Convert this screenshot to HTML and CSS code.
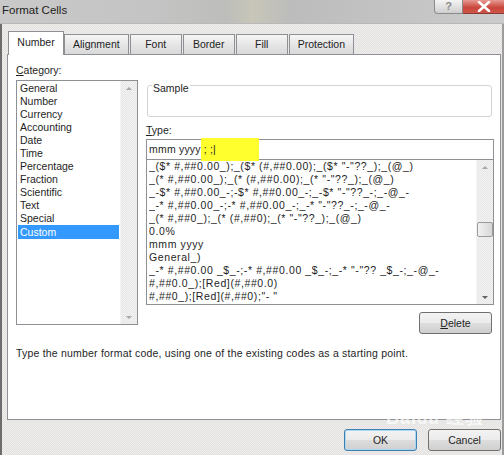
FILE: index.html
```html
<!DOCTYPE html>
<html>
<head>
<meta charset="utf-8">
<link rel="stylesheet" href="styles.css">
</head>
<body>
<div class="window">
  <div class="titlebar">
    <span class="title">Format Cells</span>
    <div class="caption-btns">
      <div class="btn-help">?</div>
      <div class="btn-close">
        <svg width="14" height="11" viewBox="0 0 14 11"><path d="M2 1 L12 10 M12 1 L2 10" stroke="#fff" stroke-width="2.6" stroke-linecap="round"/></svg>
      </div>
    </div>
  </div>
  <div class="client">
    <div class="tabs">
      <div class="tab active">Number</div>
      <div class="tab">Alignment</div>
      <div class="tab">Font</div>
      <div class="tab">Border</div>
      <div class="tab">Fill</div>
      <div class="tab">Protection</div>
    </div>
    <div class="panel">
      <div class="columns">
        <div class="left">
          <div class="label"><u>C</u>ategory:</div>
          <div class="catbox">
            <ul class="catlist">
              <li>General</li>
              <li>Number</li>
              <li>Currency</li>
              <li>Accounting</li>
              <li>Date</li>
              <li>Time</li>
              <li>Percentage</li>
              <li>Fraction</li>
              <li>Scientific</li>
              <li>Text</li>
              <li>Special</li>
              <li class="sel">Custom</li>
            </ul>
            <div class="vscroll">
              <span class="arrow up"></span>
              <span class="arrow down"></span>
            </div>
          </div>
        </div>
        <div class="right">
          <div class="sample">
            <span class="legend">Sample</span>
          </div>
          <div class="label type-label"><u>T</u>ype:</div>
          <div class="typebox">mmm yyyy<span class="marker">; ;|</span></div>
          <div class="codebox">
            <ul class="codelist">
              <li>_($* #,##0.00_);_($* (#,##0.00);_($* "-"??_);_(@_)</li>
              <li>_(* #,##0.00_);_(* (#,##0.00);_(* "-"??_);_(@_)</li>
              <li>_-$* #,##0.00_-;-$* #,##0.00_-;_-$* "-"??_-;_-@_-</li>
              <li>_-* #,##0.00_-;-* #,##0.00_-;_-* "-"??_-;_-@_-</li>
              <li>_(* #,##0_);_(* (#,##0);_(* "-"??_);_(@_)</li>
              <li>0.0%</li>
              <li>mmm yyyy</li>
              <li>General_)</li>
              <li>_-* #,##0.00 _$_-;-* #,##0.00 _$_-;_-* "-"?? _$_-;_-@_-</li>
              <li>#,##0.0_);[Red](#,##0.0)</li>
              <li>#,##0_);[Red](#,##0);"- "</li>
            </ul>
            <div class="vscroll">
              <span class="arrow up"></span>
              <span class="thumb"></span>
              <span class="arrow down"></span>
            </div>
          </div>
          <div class="delete-row">
            <button class="btn delete"><u>D</u>elete</button>
          </div>
        </div>
      </div>
      <p class="hint">Type the number format code, using one of the existing codes as a starting point.</p>
    </div>
    <div class="footer">
      <button class="btn ok">OK</button>
      <button class="btn cancel">Cancel</button>
    </div>
    <div class="watermark">Bai<span class="paw">du</span> 经验</div>
  </div>
</div>
</body>
</html>
```

FILE: styles.css
```css
* { box-sizing: border-box; }
html, body { margin: 0; padding: 0; }
body {
  width: 504px;
  height: 455px;
  overflow: hidden;
  font-family: "Liberation Sans", Arial, "Noto Sans CJK SC", sans-serif;
  font-size: 10.5px;
  color: #1e1e1e;
  background: #e9e9e9;
}
.window {
  position: relative;
  width: 504px;
  height: 455px;
  background: #e9e8e6;
}
.titlebar {
  height: 24px;
  display: flex;
  align-items: flex-start;
  background: linear-gradient(90deg, #c9c9c9 0%, #c4c4c4 30%, #bdbdbb 45%, #c8c6b8 50%, #bcbcbc 58%, #c4c4c4 80%, #cbcbcb 100%);
  border-bottom: 1px solid #b8b8b8;
}
.title {
  font-size: 11.5px;
  color: #222;
  padding: 4px 0 0 2px;
}
.caption-btns {
  margin-left: auto;
  display: flex;
}
.btn-help {
  width: 29px;
  height: 14px;
  border: 1px solid #8a8a8a;
  border-top: none;
  border-radius: 0 0 0 4px;
  background: linear-gradient(#f4f4f4, #cfcfcf);
  color: #8a8a8a;
  font-weight: bold;
  font-size: 11px;
  line-height: 12px;
  text-align: center;
}
.btn-close {
  width: 41px;
  height: 14px;
  background: linear-gradient(#e79a92, #c8453a 60%, #d0554a);
  border-bottom: 1px solid #8a3a33;
  display: flex;
  align-items: center;
  justify-content: center;
}
.client {
  height: 431px;
  border-left: 2px solid #6d6d6d;
  border-right: 2px solid #9c9c9c;
  padding: 7px 1px 0 5px;
  background-color: #e8e7e5;
  background-image: repeating-conic-gradient(#e3e2e0 0 25%, #eeedeb 0 50%);
  background-size: 2px 2px;
}
.tabs {
  display: flex;
  align-items: flex-end;
  height: 23px;
  padding-left: 1px;
  gap: 1px;
  position: relative;
  z-index: 1;
}
.tab {
  height: 20px;
  min-width: 52px;
  padding: 0 8px;
  border: 1px solid #8e9096;
  border-bottom: none;
  background: linear-gradient(#f6f6f6, #e6e6e6 50%, #d9d9d9);
  text-align: center;
  line-height: 19px;
  white-space: nowrap;
}
.tab.active {
  height: 24px;
  margin-bottom: -1px;
  min-width: 56px;
  background: #fff;
  line-height: 20px;
  margin-right: -1px;
}
.panel {
  background: #fff;
  border: 1px solid #8e9096;
  height: 366px;
  padding: 9px 7px 0 8px;
}
.columns {
  display: grid;
  grid-template-columns: 122px 348px;
  column-gap: 8px;
}
.label {
  height: 13px;
  line-height: 13px;
}
.catbox {
  margin-top: 3px;
  height: 245px;
  border: 1px solid #8e9096;
  display: flex;
}
ul { list-style: none; margin: 0; padding: 0; }
.catlist {
  flex: 1;
  padding: 1px 1px 0 1px;
}
.catlist li {
  height: 13px;
  line-height: 13px;
  padding-left: 2px;
  white-space: nowrap;
}
.catlist li.sel {
  background: #3399ff;
  color: #fff;
  height: 14px;
  line-height: 14px;
}
.vscroll {
  width: 17px;
  background-color: #ececec;
  background-image: repeating-conic-gradient(#e6e6e6 0 25%, #f3f3f3 0 50%);
  background-size: 2px 2px;
  border-left: 1px solid #f4f4f4;
  display: flex;
  flex-direction: column;
  align-items: center;
  padding: 6px 0 5px;
}
.arrow {
  width: 0;
  height: 0;
  border-left: 3px solid transparent;
  border-right: 3px solid transparent;
}
.arrow.up { border-bottom: 3px solid #a8a8a8; }
.arrow.down { border-top: 3px solid #606060; margin-top: auto; }
.catbox .arrow.down { border-top-color: #a8a8a8; }
.thumb {
  width: 16px;
  height: 15px;
  margin-top: 53px;
  border: 1px solid #9a9a9a;
  border-radius: 2px;
  background: linear-gradient(90deg, #f2f2f2, #d7d7d7);
}
.sample {
  margin-top: 21px;
  margin-left: 1px;
  width: 345px;
  height: 32px;
  border: 1px solid #d3d3d3;
  border-radius: 3px;
  position: relative;
}
.legend {
  position: absolute;
  left: 4px;
  top: -4px;
  background: #fff;
  padding: 0 1px;
  line-height: 13px;
}
.type-label {
  margin-top: 7px;
}
.typebox {
  margin-top: 2px;
  height: 21px;
  border: 1px solid #8e9096;
  padding-left: 2px;
  line-height: 19px;
  font-size: 10.5px;
  letter-spacing: 0.2px;
  white-space: nowrap;
}
.marker {
  display: inline-block;
  background: #ffff2e;
  width: 58px;
  height: 23px;
  margin: -2px 0 -3px 0;
  line-height: 23px;
  vertical-align: top;
  padding-left: 3px;
}
.codebox {
  height: 145px;
  border: 1px solid #8e9096;
  border-top: none;
  display: flex;
}
.codelist {
  flex: 1;
  padding: 0 0 0 2px;
  letter-spacing: 0.6px;
}
.codelist li {
  height: 13px;
  line-height: 13px;
  white-space: nowrap;
  overflow: hidden;
}
.delete-row {
  display: flex;
  justify-content: flex-end;
  padding: 7px 2px 0 0;
}
.btn {
  font-family: inherit;
  font-size: 10.5px;
  color: #1e1e1e;
  width: 73px;
  height: 22px;
  border: 1px solid #707070;
  border-radius: 3px;
  background: linear-gradient(#f3f3f3, #ebebeb 48%, #dddddd 52%, #cfcfcf);
  padding: 0;
}
.hint {
  margin: 13px 0 0 0;
  line-height: 13px;
  white-space: nowrap;
  letter-spacing: 0.2px;
}
.footer {
  display: flex;
  justify-content: flex-end;
  gap: 11px;
  padding-top: 9px;
}
.btn.ok {
  border-color: #3c7fb1;
  box-shadow: inset 0 0 0 1px #a9d6f1;
}
.watermark {
  position: absolute;
  left: 386px;
  top: 403px;
  font-size: 18px;
  font-weight: bold;
  color: rgba(255, 255, 255, 0.7);
  letter-spacing: 1px;
  pointer-events: none;
}
.paw { font-size: 17px; }
```
